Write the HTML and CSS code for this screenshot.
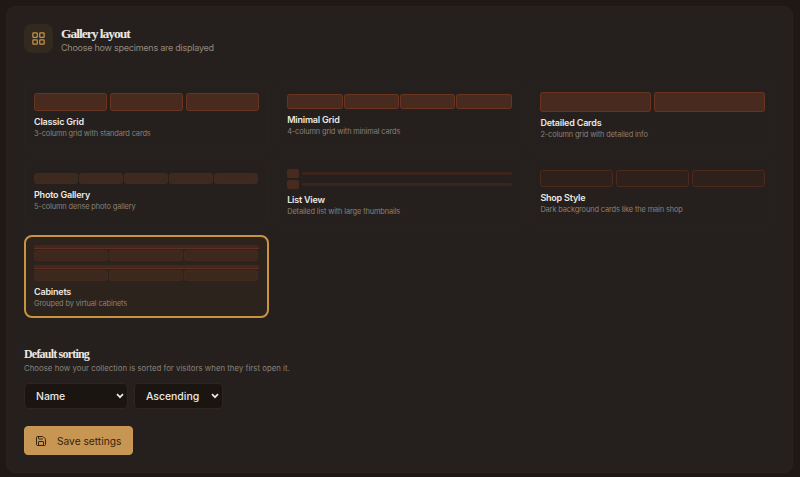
FILE: index.html
```html
<!DOCTYPE html>
<html lang="en">
<head>
<meta charset="utf-8">
<title>Gallery layout</title>
<link rel="stylesheet" href="styles.css">
</head>
<body>
<main class="panel">
  <header class="head">
    <span class="head-icon">
      <svg viewBox="0 0 24 24" width="15" height="15" fill="none" stroke="currentColor" stroke-width="2" stroke-linejoin="round"><rect x="3" y="3" width="7" height="7" rx="1"/><rect x="14" y="3" width="7" height="7" rx="1"/><rect x="14" y="14" width="7" height="7" rx="1"/><rect x="3" y="14" width="7" height="7" rx="1"/></svg>
    </span>
    <div>
      <h1 class="title">Gallery layout</h1>
      <p class="subtitle">Choose how specimens are displayed</p>
    </div>
  </header>

  <section class="options">
    <div class="card">
      <div class="preview classic"><i></i><i></i><i></i></div>
      <h2 class="name">Classic Grid</h2>
      <p class="desc">3-column grid with standard cards</p>
    </div>
    <div class="card">
      <div class="preview minimal"><i></i><i></i><i></i><i></i></div>
      <h2 class="name">Minimal Grid</h2>
      <p class="desc">4-column grid with minimal cards</p>
    </div>
    <div class="card">
      <div class="preview detailed"><i></i><i></i></div>
      <h2 class="name">Detailed Cards</h2>
      <p class="desc">2-column grid with detailed info</p>
    </div>
    <div class="card">
      <div class="preview photo"><i></i><i></i><i></i><i></i><i></i></div>
      <h2 class="name">Photo Gallery</h2>
      <p class="desc">5-column dense photo gallery</p>
    </div>
    <div class="card">
      <div class="list">
        <div class="list-row"><i class="thumb"></i><i class="line"></i></div>
        <div class="list-row"><i class="thumb"></i><i class="line"></i></div>
      </div>
      <h2 class="name">List View</h2>
      <p class="desc">Detailed list with large thumbnails</p>
    </div>
    <div class="card">
      <div class="preview shop"><i></i><i></i><i></i></div>
      <h2 class="name">Shop Style</h2>
      <p class="desc">Dark background cards like the main shop</p>
    </div>
    <div class="card selected">
      <div class="cabinets">
        <div class="shelf"></div>
        <div class="preview drawers"><i></i><i></i><i></i></div>
        <div class="shelf second"></div>
        <div class="preview drawers"><i></i><i></i><i></i></div>
      </div>
      <h2 class="name">Cabinets</h2>
      <p class="desc">Grouped by virtual cabinets</p>
    </div>
  </section>

  <section class="sorting">
    <h2 class="sort-title">Default sorting</h2>
    <p class="sort-text">Choose how your collection is sorted for visitors when they first open it.</p>
    <div class="selects">
      <div class="select by">Name<svg viewBox="0 0 8 6" width="8" height="6" fill="none" stroke="currentColor" stroke-width="1.7"><path d="M1 1.2l3 3 3-3"/></svg></div>
      <div class="select order">Ascending<svg viewBox="0 0 8 6" width="8" height="6" fill="none" stroke="currentColor" stroke-width="1.7"><path d="M1 1.2l3 3 3-3"/></svg></div>
    </div>
  </section>

  <button class="save">
    <svg viewBox="0 0 24 24" width="12" height="12" fill="none" stroke="currentColor" stroke-width="2" stroke-linecap="round" stroke-linejoin="round"><path d="M15.2 3a2 2 0 0 1 1.4.6l3.8 3.8a2 2 0 0 1 .6 1.4V19a2 2 0 0 1-2 2H5a2 2 0 0 1-2-2V5a2 2 0 0 1 2-2z"/><path d="M17 21v-7a1 1 0 0 0-1-1H8a1 1 0 0 0-1 1v7"/><path d="M7 3v4a1 1 0 0 0 1 1h7"/></svg>
    <span>Save settings</span>
  </button>
</main>
</body>
</html>
```
FILE: styles.css
```css
* { box-sizing: border-box; }
body {
  margin: 0;
  height: 477px;
  padding: 6px 7px 4px 6px;
  background: #1f1815;
  color: #ece7e1;
  font-family: Inter, "Liberation Sans", sans-serif;
}
h1, h2, p { margin: 0; }
i { display: block; }
svg { display: block; flex: none; }

.panel {
  height: 467px;
  padding: 17px 17px 0;
  border: 1px solid #292320;
  border-radius: 9px;
  background: #25201d;
}
.head { display: flex; gap: 8px; height: 57px; }
.head-icon {
  display: grid;
  place-items: center;
  width: 29px;
  height: 29px;
  border-radius: 8px;
  background: #32291f;
  color: #c59345;
}
.title {
  padding-top: 2px;
  font: bold 13.5px/15px "Liberation Serif", serif;
  letter-spacing: -1px;
}
.subtitle { padding-top: 1px; font-size: 9px; line-height: 12px; letter-spacing: -0.24px; color: #91897f; }

.options {
  display: grid;
  grid-template-columns: repeat(3, 244.5px);
  grid-template-rows: 69px 69px 83px;
  gap: 8px 8.7px;
}
.card {
  display: flex;
  flex-direction: column;
  justify-content: center;
  padding: 0 9px;
  border: 1px solid #28221f;
  border-radius: 8px;
}
.selected { border: 2px solid #c9933f; padding: 0 8px; background: #2d231d; }
.name { margin-top: 4px; font-size: 9px; font-weight: 600; line-height: 13px; letter-spacing: -0.2px; }
.desc { padding-top: 1px; font-size: 7.4px; line-height: 10px; letter-spacing: -0.12px; color: #898178; }

.preview { display: grid; grid-auto-flow: column; grid-auto-columns: 1fr; gap: 2px; }
.preview i { border: 1px solid #693520; border-radius: 2.5px; background: #482b1e; }
.classic { gap: 3px; }
.classic i { height: 18px; }
.minimal { gap: 1px; }
.minimal i { height: 15px; }
.detailed { gap: 3px; }
.detailed i { height: 20px; }
.photo { gap: 1px; }
.photo i { height: 11px; border-color: #422a1e; background: #3e291e; }
.shop { gap: 3px; }
.shop i { height: 17px; border-color: #4d281d; background: #2e211c; }

.list { display: grid; gap: 2px; }
.list-row { display: flex; align-items: center; gap: 3px; }
.thumb { width: 12px; height: 9px; border-radius: 2px; background: #482b1e; }
.line { flex: 1; height: 3px; border-radius: 1px; background: #3a241c; }

.shelf { height: 4px; border-radius: 1px 1px 0 0; background: #41271d; border-bottom: 1px solid #5c3023; }
.second { margin-top: 4px; }
.drawers { gap: 1px; margin-top: 1px; }
.drawers i { height: 11px; border-color: #44291e; background: #3c281d; }

.sorting { margin-top: 29px; }
.sort-title { font: bold 12px/14px "Liberation Serif", serif; letter-spacing: -0.8px; }
.sort-text { margin-top: 1px; font-size: 7.8px; line-height: 12px; letter-spacing: 0.02px; color: #898178; }
.selects { display: flex; gap: 6px; margin-top: 9px; }
.select {
  display: flex;
  align-items: center;
  justify-content: space-between;
  height: 26px;
  padding: 0 3px 0 11px;
  border: 1px solid #2c2521;
  border-radius: 4px;
  background: #1b1512;
  font-size: 10.5px;
  font-weight: 500;
  letter-spacing: -0.05px;
}
.by { width: 104px; }
.order { width: 89px; }
.save {
  display: flex;
  align-items: center;
  gap: 10px;
  width: 109px;
  height: 29px;
  margin-top: 17px;
  padding: 0 10px;
  border: 1px solid #c99a55;
  border-radius: 4px;
  background: #c79652;
  color: #35230f;
  font: 10.2px Inter, "Liberation Sans", sans-serif;
  white-space: nowrap;
}
```
